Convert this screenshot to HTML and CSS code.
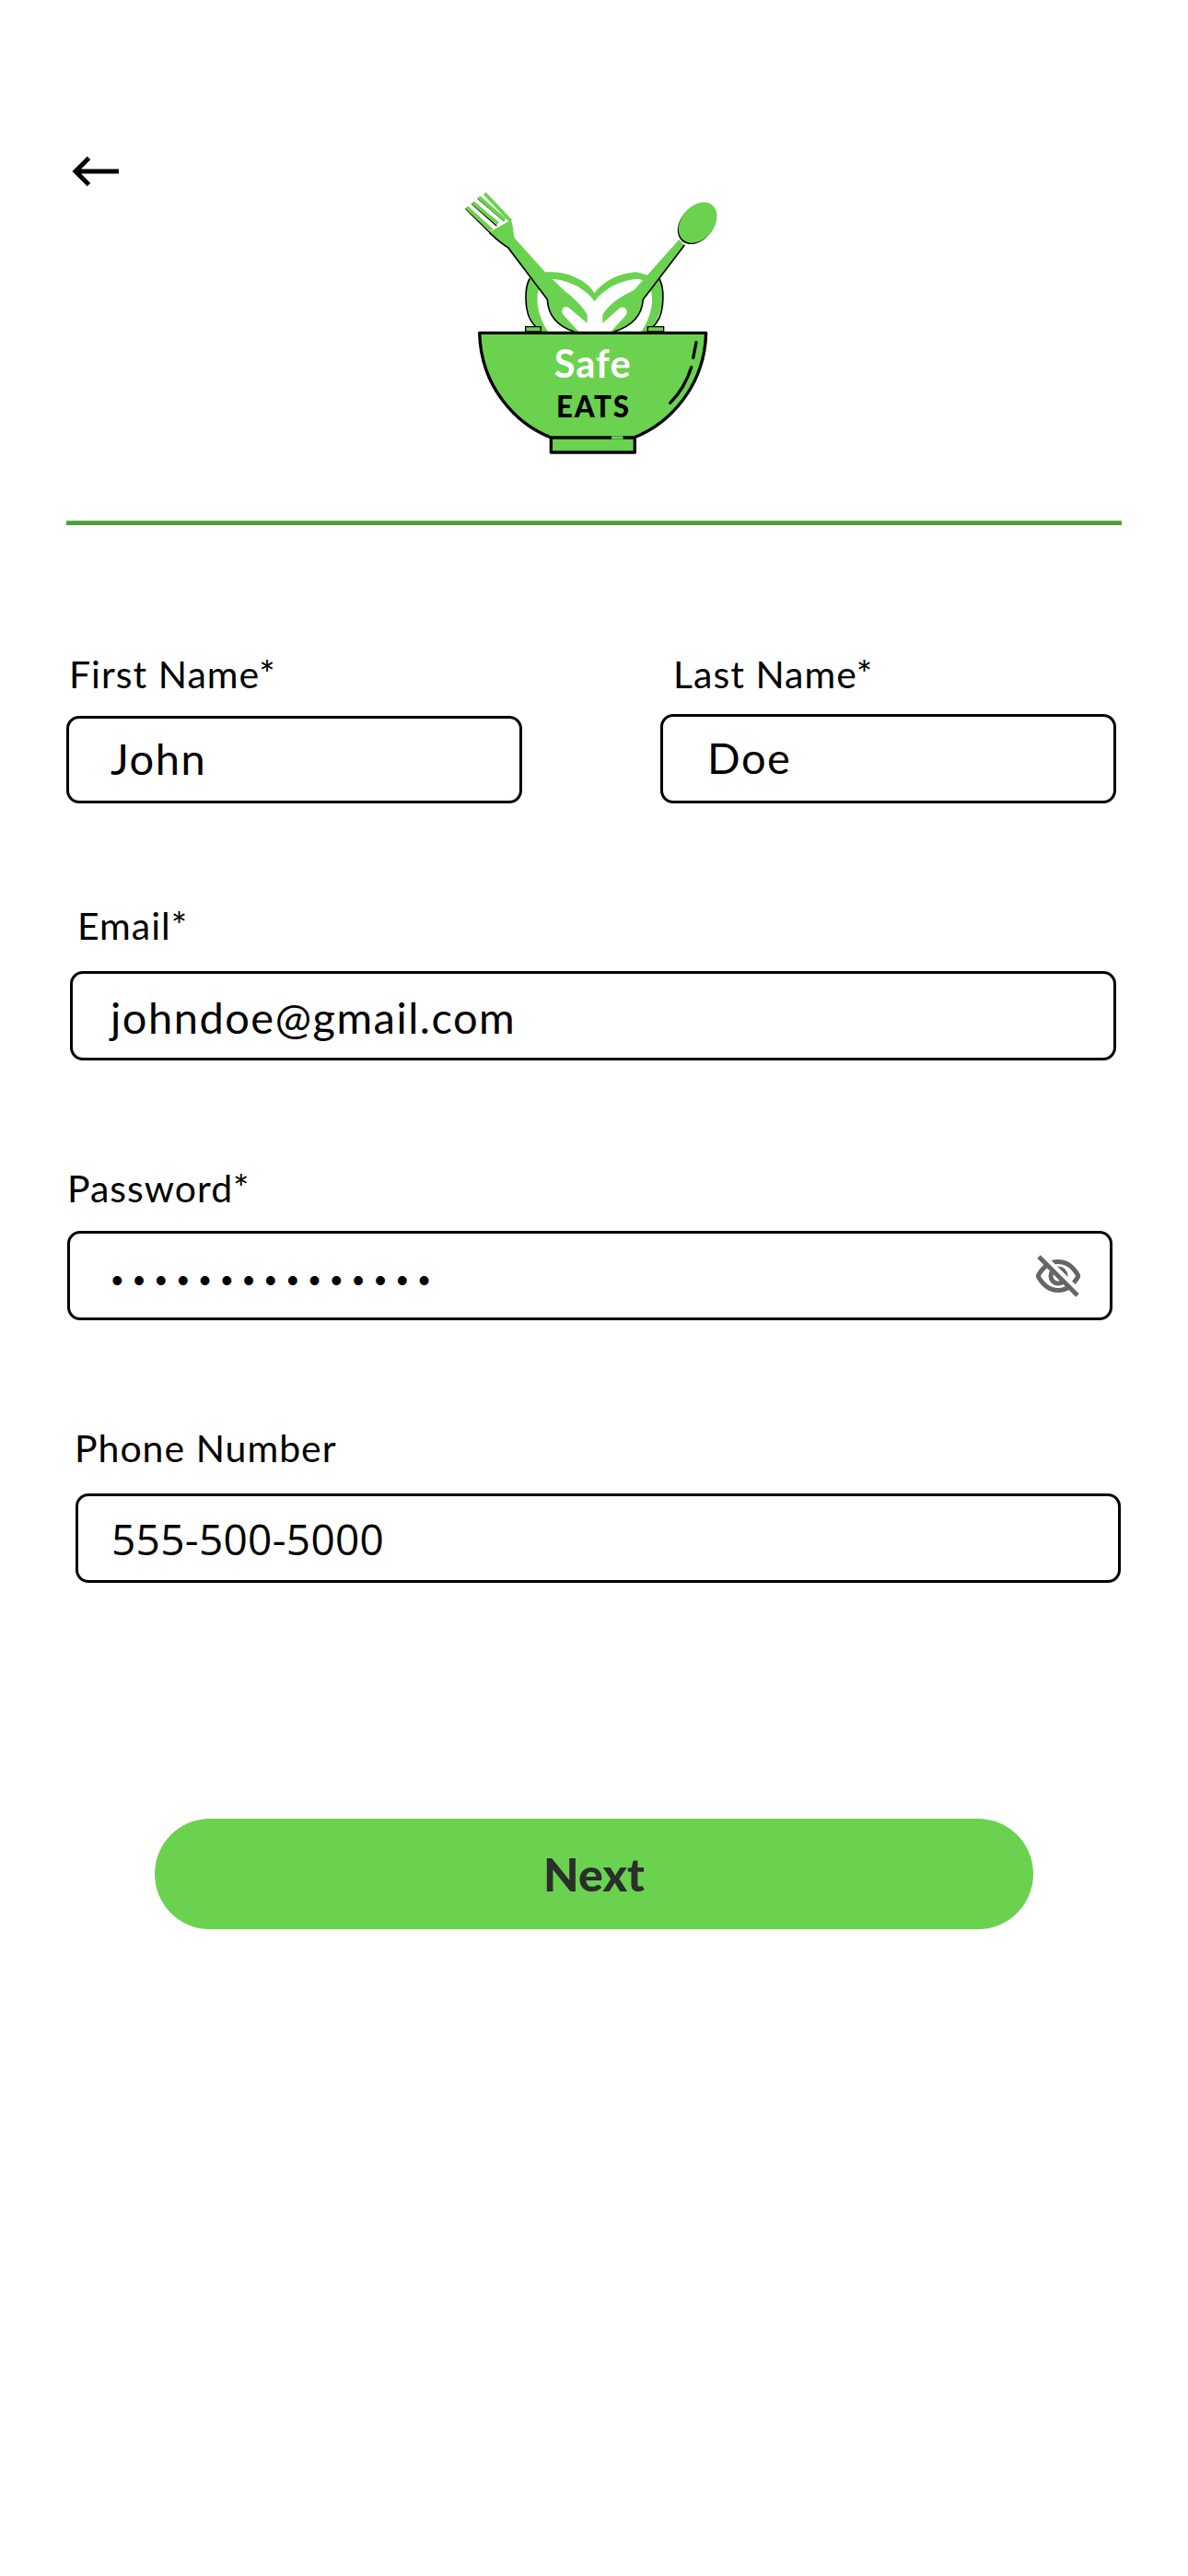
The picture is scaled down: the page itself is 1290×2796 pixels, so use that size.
FILE: index.html
```html
<!DOCTYPE html>
<html lang="en">
<head>
<meta charset="utf-8">
<title>Safe Eats</title>
<link rel="stylesheet" href="styles.css">
</head>
<body>
<main class="screen">
  <header class="top">
    <svg class="back" viewBox="0 0 60 40" aria-label="Back">
      <path d="M54 19H7M21.500 4.500 7 19l14.500 14.500" fill="none" stroke="#000" stroke-width="5"/>
    </svg>
    <svg class="logo" viewBox="0 0 1080 960" role="img" aria-label="Safe Eats">
      <path class="green" d="M557 385C530 340 470 318 420 316H360C335 330 330 380 338 430C345 470 365 495 385 510H730C755 490 775 450 780 400C785 370 778 345 760 335L695 316C640 318 585 345 557 385Z"/>
      <path class="white" d="M557 412C530 370 470 340 415 338C360 350 355 430 405 510H710C760 430 755 350 700 338C645 340 585 370 557 412Z"/>
      <path class="edge" d="M345 338C328 370 330 430 345 465C352 480 362 492 372 500M768 338C785 370 782 430 768 465C760 480 750 492 742 500"/>
      <path class="ink-line" d="M136 109L218 190M156 93L238 166M176 76L262 150"/>
      <path class="green-line" d="M140 105L222 180M160 89L242 158M180 72L264 146M199 60L284 150"/>
      <path class="fork" d="M215 186L284 146C292 160 292 190 296 205L395 315L460 378C490 400 520 430 533 455V482L470 430C455 425 445 440 455 455L505 510H490C430 490 405 450 403 405L275 235C255 222 235 205 215 186Z"/>
      <path class="edge" d="M215 188C235 207 255 224 275 236L403 405C405 450 430 490 490 510"/>
      <path class="fork" d="M832 210L850 228L715 405C712 450 685 490 620 510H610L660 455C668 440 655 425 640 432L583 482V455C600 425 640 395 685 375Z"/>
      <path class="edge" d="M850 228L715 405C712 450 685 490 620 510"/>
      <ellipse class="ink-fill" cx="890" cy="159" rx="74" ry="53" transform="rotate(-50 890 159)"/>
      <ellipse class="green" cx="893" cy="155" rx="74" ry="53" transform="rotate(-50 893 155)"/>
      <path class="base" d="M332 510V494H382V510ZM730 510V494H782V510Z"/>
      <rect class="bowl" x="415" y="850" width="273" height="53"/>
      <path class="bowl" d="M182 514H920C915 690 800 810 685 855H415C300 810 187 690 182 514Z"/>
      <path class="gap" d="M612 855H650"/>
      <path class="shine" d="M888 545L878 595M872 626C858 670 835 710 803 742"/>
      <text class="safe" x="551" y="660">Safe</text>
      <text class="eats" x="553" y="788">EATS</text>
    </svg>
  </header>
  <hr class="rule">

  <div class="names">
    <div class="field first">
      <label class="label">First Name*</label>
      <div class="box box-first">John</div>
    </div>
    <div class="field last">
      <label class="label">Last Name*</label>
      <div class="box box-last">Doe</div>
    </div>
  </div>

  <div class="field email">
    <label class="label">Email*</label>
    <div class="box box-email">johndoe@gmail.com</div>
  </div>

  <div class="field password">
    <label class="label">Password*</label>
    <div class="box box-password">
      <span class="dots">•••••••••••••••</span>
      <svg class="eye" viewBox="0 0 48 48" aria-label="Hide password">
        <path d="M2 24C8 13 16 8.500 24 8.500S40 13 46 24C40 35 32 39.500 24 39.500S8 35 2 24Z" fill="none" stroke="#666" stroke-width="5"/>
        <circle cx="24" cy="24" r="8" fill="none" stroke="#666" stroke-width="5"/>
        <path d="M8 2L46 40" fill="none" stroke="#fff" stroke-width="5"/>
        <path d="M3 3L45 45" fill="none" stroke="#666" stroke-width="5"/>
      </svg>
    </div>
  </div>

  <div class="field phone">
    <label class="label">Phone Number</label>
    <div class="box box-phone">555-500-5000</div>
  </div>

  <button class="next" type="button">Next</button>
</main>
</body>
</html>
```

FILE: styles.css
```css
* { box-sizing: border-box; }
html, body { margin: 0; padding: 0; background: #fff; }
.screen {
  width: 1290px;
  height: 2796px;
  overflow: hidden;
  background: #fff;
  color: #000;
  font-family: Lato, "Noto Sans", sans-serif;
}
.top {
  display: flex;
  align-items: flex-start;
  height: 565px;
  padding-top: 167px;
}
.back { width: 60px; height: 40px; margin-left: 75px; flex: none; }
.logo { width: 360px; height: 320px; margin-left: 325px; margin-top: 23px; flex: none; }

.white { fill: #fff; }
.edge { fill: none; stroke: #000; stroke-width: 5; }
.ink-line { fill: none; stroke: #000; stroke-width: 4; }
.green-line { fill: none; stroke: #6bd24f; stroke-width: 12; }
.fork { fill: #6bd24f; }
.ink-fill { fill: #000; }
.green { fill: #6bd24f; }
.base { fill: #6bd24f; stroke: #000; stroke-width: 4; }
.bowl { fill: #6bd24f; stroke: #000; stroke-width: 10; stroke-linejoin: round; }
.gap { stroke: #6bd24f; stroke-width: 10; }
.shine { fill: none; stroke: #000; stroke-width: 10; stroke-linecap: round; }
.safe { fill: #fff; font-family: Lato, sans-serif; font-size: 125px; font-weight: 700; letter-spacing: 3px; text-anchor: middle; }
.eats { fill: #000; font-family: Lato, sans-serif; font-size: 94px; font-weight: 900; letter-spacing: 5px; text-anchor: middle; }

.rule {
  height: 5px;
  width: 1146px;
  margin: 0 0 0 72px;
  border: 0;
  border-top: 1px solid #6fb85f;
  background: #4d9e36;
}

.names { display: flex; margin-top: 138px; align-items: flex-end; }
.field { display: flex; flex-direction: column; }
.label { display: block; font-size: 41px; line-height: 48px; letter-spacing: 1px; white-space: nowrap; }
.box {
  display: flex;
  align-items: center;
  border: 3px solid #000;
  border-radius: 14px;
  font-size: 47px;
  line-height: 56px;
  letter-spacing: 1.500px;
  height: 97px;
  background: #fff;
}

.first { width: 495px; margin-left: 72px; }
.first .label { margin: 0 0 21px 3px; }
.box-first { height: 95px; padding: 0 0 4px 45px; }

.last { width: 495px; margin-left: 150px; }
.last .label { margin: 0 0 19px 14px; }
.box-last { padding: 0 0 4px 48px; }

.email { width: 1136px; margin: 109px 0 0 76px; }
.email .label { margin: 0 0 25px 8px; }
.box-email { padding: 2px 0 0 41px; }

.password { width: 1135px; margin: 115px 0 0 73px; }
.password .label { margin: 0 0 22px 0; }
.box-password { justify-content: space-between; padding: 0 32px 0 45px; }
.dots {
  margin-top: 10px;
  font-family: "Liberation Sans", sans-serif;
  font-size: 36px;
  letter-spacing: 11.200px;
}
.eye { width: 48px; height: 48px; flex: none; }

.phone { width: 1135px; margin: 115px 0 0 82px; }
.phone .label { margin: 0 0 25px -1px; }
.box-phone { padding-left: 36px; font-family: "Open Sans", sans-serif; font-size: 46px; letter-spacing: 0.300px; }

.next {
  display: block;
  width: 954px;
  height: 120px;
  margin: 256px 0 0 168px;
  border: 0;
  border-radius: 60px;
  background: #6bd24f;
  color: #2b2f2b;
  font-family: Lato, sans-serif;
  font-size: 50px;
  font-weight: 900;
}
```
